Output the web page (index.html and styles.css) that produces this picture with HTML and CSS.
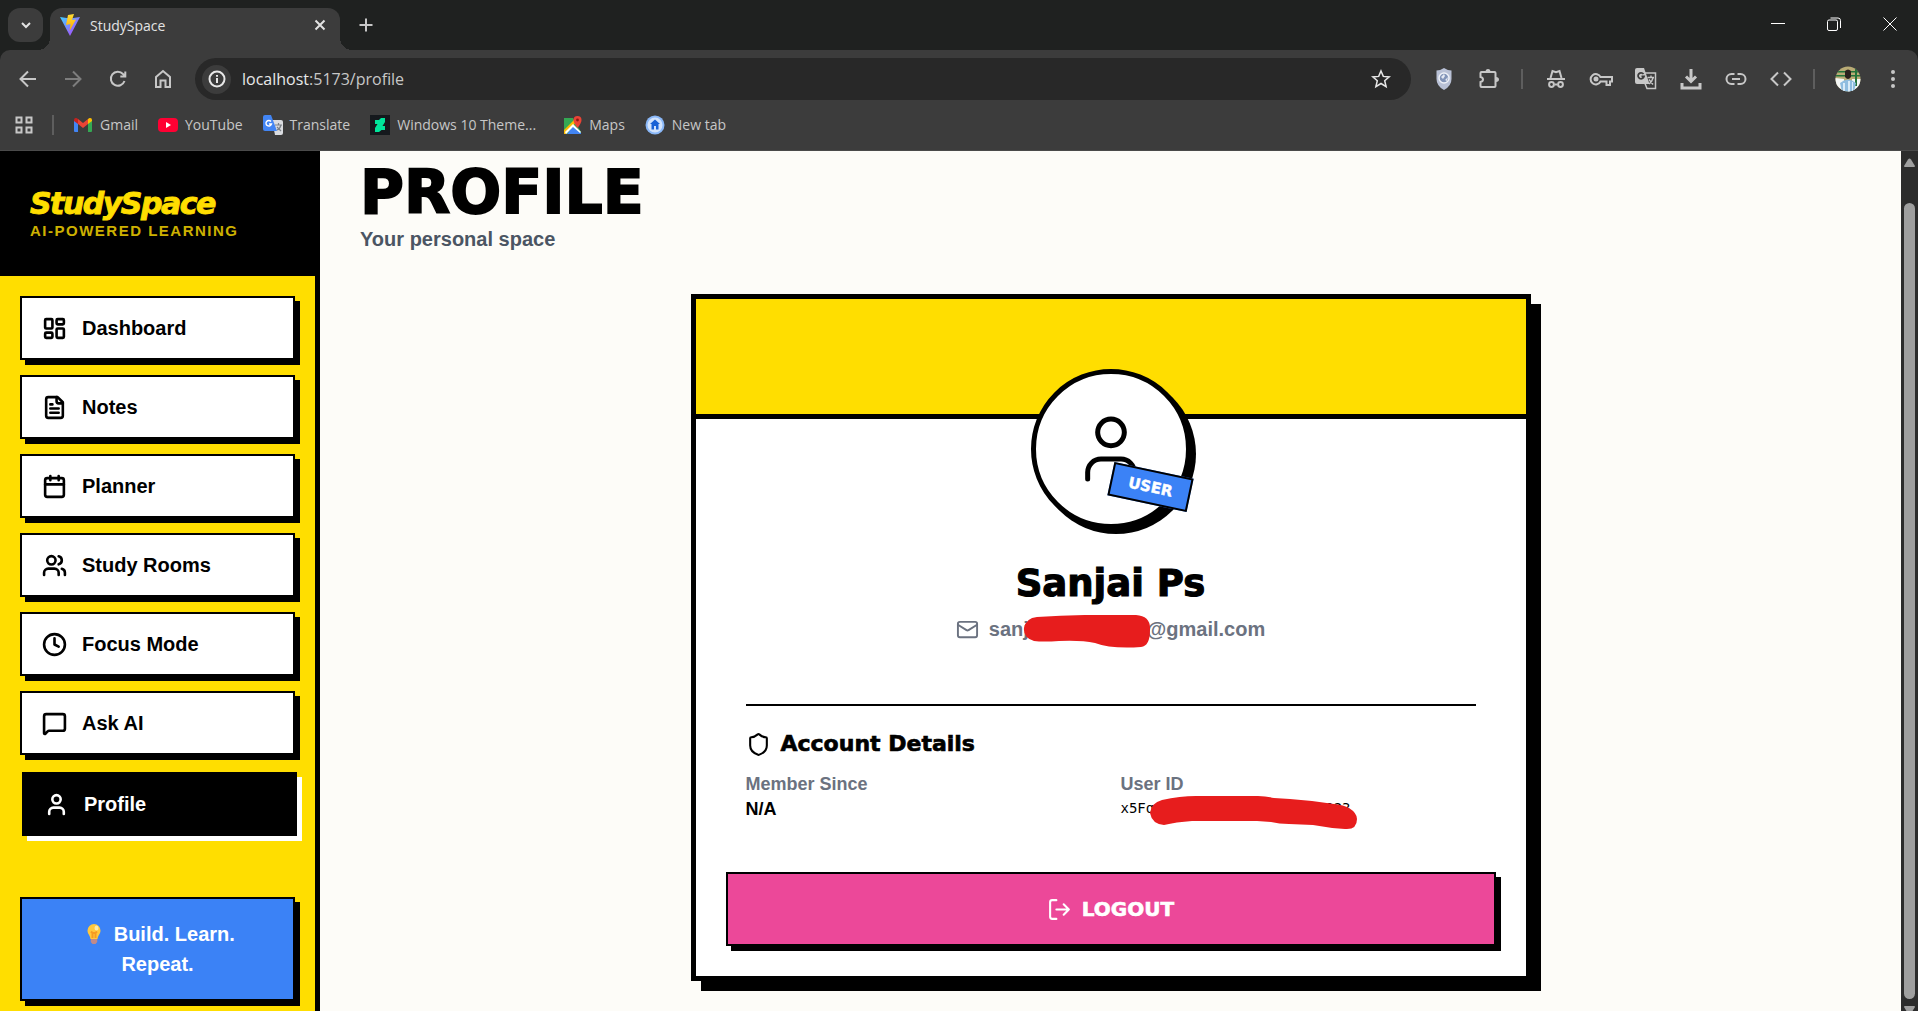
FILE: index.html
```html
<!DOCTYPE html>
<html lang="en">

<head>
    <meta charset="UTF-8">
    <meta name="viewport" content="width=device-width, initial-scale=1.0">
    <title>StudySpace</title>
    <link rel="stylesheet" href="styles.css">
</head>

<body>
    <header class="browser">
        <div class="tab-strip">
            <button class="tab-search" aria-label="Search tabs">
                <svg width="16" height="16" viewBox="0 0 16 16"><path d="M4 6l4 4 4-4" /></svg>
            </button>
            <div class="tab">
                <svg class="fill" width="20" height="24" viewBox="0 0 20 24">
                    <defs>
                        <linearGradient id="vite" x1="0" y1="0" x2="1" y2="1">
                            <stop offset="0" stop-color="#41d1ff" />
                            <stop offset="1" stop-color="#bd34fe" />
                        </linearGradient>
                        <linearGradient id="bolt" x1="0" y1="0" x2="0" y2="1">
                            <stop offset="0" stop-color="#ffdd35" />
                            <stop offset="1" stop-color="#ffa800" />
                        </linearGradient>
                    </defs>
                    <path fill="url(#vite)" d="M0 4l10 1.500L20 4 10 23z" />
                    <path fill="url(#bolt)" d="M8 2l6-1-2 6 4-.5L9.500 18l1-7L6 12z" />
                </svg>
                <span class="tab-title">StudySpace</span>
                <button class="tab-close" aria-label="Close tab">
                    <svg width="16" height="16" viewBox="0 0 16 16"><path d="M3.500 3.500l9 9M12.500 3.500l-9 9" /></svg>
                </button>
            </div>
            <button class="new-tab" aria-label="New tab">
                <svg width="16" height="16" viewBox="0 0 16 16"><path d="M8 1.500v13M1.500 8h13" /></svg>
            </button>
            <div class="window-buttons">
                <button aria-label="Minimize"><svg width="14" height="14" viewBox="0 0 14 14"><path d="M0 6.500h14" /></svg></button>
                <button aria-label="Restore"><svg width="14" height="14" viewBox="0 0 14 14"><rect x=".5" y="3" width="10" height="10.500" rx="1.500" /><path d="M3.500 1h7.500q2.500 0 2.500 2.500V11" /></svg></button>
                <button aria-label="Close"><svg width="14" height="14" viewBox="0 0 14 14"><path d="M.5.5l13 13M13.500.5l-13 13" /></svg></button>
            </div>
        </div>

        <div class="toolbar">
            <button class="tool" aria-label="Back"><svg width="18" height="18" viewBox="0 0 18 18"><path d="M17 9H2M9 1.500L1.500 9 9 16.500" /></svg></button>
            <button class="tool tool-off" aria-label="Forward"><svg width="18" height="18" viewBox="0 0 18 18"><path d="M1 9h15M9 1.500L16.500 9 9 16.500" /></svg></button>
            <button class="tool" aria-label="Reload"><svg width="18" height="18" viewBox="0 0 18 18"><path d="M15.500 11A7 7 0 1 1 14 4l2 2M16.300 1.500v5h-5" /></svg></button>
            <button class="tool" aria-label="Home"><svg width="18" height="20" viewBox="0 0 18 20"><path d="M2 8l7-6 7 6v10h-4.500v-6.500h-5V18H2z" /></svg></button>
            <div class="omnibox">
                <button class="site-info" aria-label="Site information">
                    <svg width="18" height="18" viewBox="0 0 18 18"><circle cx="9" cy="9" r="7.500" /><path d="M9 8v5M9 5v1.800" /></svg>
                </button>
                <span class="url">localhost<span class="url-dim">:5173/profile</span></span>
                <button class="star" aria-label="Bookmark this tab">
                    <svg width="20" height="20" viewBox="0 0 20 20"><path d="M10 2l2.300 5.400 5.900.5-4.500 3.900 1.400 5.800-5.100-3.100-5.100 3.100 1.400-5.800L1.800 7.900l5.900-.5z" /></svg>
                </button>
            </div>
            <button class="tool" aria-label="Privacy shield">
                <svg class="fill" width="18" height="22" viewBox="0 0 18 22"><path fill="#b9c1d6" d="M9 0q4 2.500 7.500 2.500V11q0 7-7.500 11Q1.500 18 1.500 11V2.500Q5 2.500 9 0z" /><circle cx="9" cy="10" r="5" fill="#8294b8" stroke="#eef1f8" stroke-width="1.500" /><path fill="#e3e8f2" d="M6 9l3-3 1 2-2 3zM10 12l3-3-1 4z" /></svg>
            </button>
            <button class="tool" aria-label="Extensions"><svg width="22" height="22" viewBox="0 0 22 22"><path d="M3.500 4h13q1 0 1 1v13q0 1-1 1h-13q-1 0-1-1v-4q2.500-.5 2.500-2.500T2.500 9V5q0-1 1-1z" /><path class="solid" stroke="none" d="M7.500 4a2.500 3 0 0 1 5 0zM18 9a3 2.500 0 0 1 0 5z" /></svg></button>
            <span class="divider"></span>
            <button class="tool" aria-label="Incognito"><svg width="20" height="20" viewBox="0 0 20 20"><path d="M1 10h18M4.500 9l2-7 3.500 1.200L13.500 2l2 7M8.500 15.500h3" /><circle cx="5.500" cy="15.500" r="2.400" /><circle cx="14.500" cy="15.500" r="2.400" /></svg></button>
            <button class="tool" aria-label="Passwords"><svg width="24" height="18" viewBox="0 0 24 18"><path d="M11.500 7H23v4.500h-2V15h-3.500v-3.500h-6A5.200 5.200 0 1 1 11.500 7z" /><circle class="solid" cx="7" cy="9" r="1.500" /></svg></button>
            <button class="tool" aria-label="Translate page"><svg width="22" height="22" viewBox="0 0 22 22"><path stroke-width="1.500" d="M10 5h10.500v15.500H12l-2-5" /><path class="solid" stroke="none" d="M2 0h7l5.500 16H2q-2 0-2-2V2q0-2 2-2z" /><path stroke="#3c3c3c" stroke-width="1.800" d="M8.500 6A3 3 0 1 0 9 8.500H6.500" /><path stroke-width="1.400" d="M12.500 9.500h6.500M16 7.500v2M18 10q-1 4-4 6M14 11.500l4 5" /></svg></button>
            <button class="tool" aria-label="Downloads"><svg class="bold" width="22" height="22" viewBox="0 0 22 22"><path d="M11 1v12M6 8.500l5 5 5-5M2 15v5h18v-5" /></svg></button>
            <button class="tool" aria-label="Copy link"><svg width="22" height="14" viewBox="0 0 22 14"><path d="M9.500 2H6.500a5 5 0 0 0 0 10h3M12.500 2h3a5 5 0 0 1 0 10h-3M7 7h8" /></svg></button>
            <button class="tool" aria-label="Developer tools"><svg width="22" height="16" viewBox="0 0 22 16"><path d="M8 1.500L1.500 8 8 14.500M14 1.500L20.500 8 14 14.500" /></svg></button>
            <span class="divider"></span>
            <button class="tool" aria-label="Account">
                <svg class="fill" width="26" height="26" viewBox="0 0 26 26">
                    <defs><clipPath id="face"><circle cx="13" cy="13" r="12.500" /></clipPath></defs>
                    <g clip-path="url(#face)">
                        <path fill="#b9ab75" d="M0 0h26v26H0z" />
                        <path fill="#f4f7f5" d="M0 12l9 1v13H0zM17 13h9v13h-9z" />
                        <path fill="#22733a" d="M0 5h26v1.500H0zM0 9h26v1.500H0zM20 2h2v18h-2z" />
                        <path fill="#8fbde0" d="M5 17q8-7 16 0l-2 9H7z" />
                        <path fill="#d8ebf8" d="M8 17h2v9H8zM13 15h2v11h-2zM17 16h1v10h-1z" />
                        <path fill="#2c211e" d="M10 5q3-3 6 0v6q-3 4-6 0z" />
                    </g>
                </svg>
            </button>
            <button class="tool" aria-label="Menu"><svg width="6" height="20" viewBox="0 0 6 20"><circle class="solid" cx="3" cy="3" r="1" /><circle class="solid" cx="3" cy="10" r="1" /><circle class="solid" cx="3" cy="17" r="1" /></svg></button>
        </div>

        <nav class="bookmarks" aria-label="Bookmarks">
            <button class="apps" aria-label="Apps"><svg width="18" height="18" viewBox="0 0 18 18"><path d="M1.500 1.500h5v5h-5zM11.500 1.500h5v5h-5zM1.500 11.500h5v5h-5zM11.500 11.500h5v5h-5z" /></svg></button>
            <span class="divider"></span>
            <a class="bookmark" href="#">
                <svg class="fill" width="20" height="20" viewBox="0 0 20 20"><path fill="#4285f4" d="M1 5l4 3v9H2q-1 0-1-1z" /><path fill="#34a853" d="M15 8l4-3v11q0 1-1 1h-3z" /><path fill="#ea4335" d="M5 4l5 4 5-4v5l-5 4-5-4z" /><path fill="#c5221f" d="M1 5q0-2.500 2.500-2L5 4v5L1 6z" /><path fill="#fbbc04" d="M19 5q0-2.500-2.500-2L15 4v5l4-3z" /></svg>
                Gmail
            </a>
            <a class="bookmark" href="#">
                <svg class="fill" width="20" height="20" viewBox="0 0 20 20"><rect y="3" width="20" height="14" rx="4" fill="#ff0033" /><path fill="#fff" d="M8 7l5 3-5 3z" /></svg>
                YouTube
            </a>
            <a class="bookmark" href="#">
                <svg class="fill" width="20" height="20" viewBox="0 0 20 20"><path fill="#dadce0" d="M9 5h9q2 0 2 2v11q0 2-2 2h-6z" /><path fill="#4285f4" d="M2 0h6l6 16H2q-2 0-2-2V2q0-2 2-2z" /><path fill="none" stroke="#fff" stroke-width="1.400" d="M8 6.500A2.800 2.800 0 1 0 8.500 9H6" /><path fill="none" stroke="#7a8087" stroke-width="1.200" d="M12 10h7M15.500 8v2M18 10q-1 4-4 5M14 12l4 4" /></svg>
                Translate
            </a>
            <a class="bookmark" href="#">
                <svg class="fill" width="20" height="20" viewBox="0 0 20 20"><path fill="#15191d" d="M0 0h20v20H0z" /><path fill="#00e59b" d="M11 3h4v4l-2.500 4H15v4h-3.500L9 17H5v-4l2.500-4H5V5h4z" /></svg>
                <span class="bookmark-long">Windows 10 Theme...</span>
            </a>
            <a class="bookmark" href="#">
                <svg class="fill" width="18" height="18" viewBox="0 0 18 18"><path fill="#34a853" d="M0 2h9l8 14v2H0z" /><path fill="#fbbc04" d="M0 14L11 3l2 2L2 18H0z" /><path fill="#4285f4" d="M9 10l8 7v1H3z" /><path fill="#fff" d="M1 16l8-8 8 8-1 1-7-6-7 7z" /><path fill="#ea4335" d="M13.500 0a4 4 0 0 1 4 4q0 3-4 8-4-5-4-8a4 4 0 0 1 4-4z" /><circle cx="13.500" cy="4" r="1.400" fill="#8c1a12" /></svg>
                Maps
            </a>
            <a class="bookmark" href="#">
                <svg class="fill" width="20" height="20" viewBox="0 0 20 20"><circle cx="10" cy="10" r="9.500" fill="#8ab8f8" /><circle cx="10" cy="10" r="7.500" fill="#d2e3fc" /><path fill="#1a62d6" d="M10 4.500l5 4.500h-1.500v5.500h-2.500V11H9v3.500H6.500V9H5z" /></svg>
                New tab
            </a>
        </nav>
    </header>

    <div class="app">
        <aside class="sidebar">
            <div class="brand">
                <div class="brand-name">StudySpace</div>
                <div class="brand-tag">AI-POWERED LEARNING</div>
            </div>
            <nav class="menu" aria-label="Main">
                <a class="menu-item" href="#">
                    <svg viewBox="0 0 24 24"><rect width="7" height="9" x="3" y="3" rx="1" /><rect width="7" height="5" x="14" y="3" rx="1" /><rect width="7" height="9" x="14" y="12" rx="1" /><rect width="7" height="5" x="3" y="16" rx="1" /></svg>
                    Dashboard
                </a>
                <a class="menu-item" href="#">
                    <svg viewBox="0 0 24 24"><path d="M15 2H6a2 2 0 0 0-2 2v16a2 2 0 0 0 2 2h12a2 2 0 0 0 2-2V7Z" /><path d="M14 2v4a2 2 0 0 0 2 2h4M10 9H8M16 13H8M16 17H8" /></svg>
                    Notes
                </a>
                <a class="menu-item" href="#">
                    <svg viewBox="0 0 24 24"><path d="M8 2v4M16 2v4M3 10h18" /><rect width="18" height="18" x="3" y="4" rx="2" /></svg>
                    Planner
                </a>
                <a class="menu-item" href="#">
                    <svg viewBox="0 0 24 24"><path d="M16 21v-2a4 4 0 0 0-4-4H6a4 4 0 0 0-4 4v2M22 21v-2a4 4 0 0 0-3-3.870M16 3.130a4 4 0 0 1 0 7.750" /><circle cx="9" cy="7" r="4" /></svg>
                    Study Rooms
                </a>
                <a class="menu-item" href="#">
                    <svg viewBox="0 0 24 24"><circle cx="12" cy="12" r="10" /><path d="M12 6v6l4 2" /></svg>
                    Focus Mode
                </a>
                <a class="menu-item" href="#">
                    <svg viewBox="0 0 24 24"><path d="M22 17a2 2 0 0 1-2 2H6.800a2 2 0 0 0-1.400.6l-2.200 2.200A.7.7 0 0 1 2 21.300V5a2 2 0 0 1 2-2h16a2 2 0 0 1 2 2z" /></svg>
                    Ask AI
                </a>
                <a class="menu-item active" href="#">
                    <svg viewBox="0 0 24 24"><path d="M19 21v-2a4 4 0 0 0-4-4H9a4 4 0 0 0-4 4v2" /><circle cx="12" cy="7" r="4" /></svg>
                    Profile
                </a>
            </nav>
            <div class="promo">
                <svg class="bulb" viewBox="0 0 14 20"><path fill="#ffc83d" d="M7 0a6.500 6.500 0 0 1 6.500 6.500c0 3.500-2.500 4.500-3 8.500h-7C3 11 .5 10 .5 6.500A6.500 6.500 0 0 1 7 0z" /><path fill="none" stroke="#f59b23" d="M5.500 14V9L4 7.500M8.500 14V9L10 7.500M5.500 9h3" /><ellipse cx="9.500" cy="4" rx="2" ry="2.500" fill="#ffe9a6" /><path fill="#c08a8a" d="M3.800 15h6.400v3L8.500 20h-3l-1.700-2z" /></svg>
                Build. Learn. Repeat.
            </div>
        </aside>

        <main class="content">
            <h1>PROFILE</h1>
            <p class="subtitle">Your personal space</p>

            <section class="card">
                <div class="cover"></div>
                <div class="card-body">
                    <div class="avatar">
                        <svg viewBox="0 0 24 24"><path d="M19 21v-2a4 4 0 0 0-4-4H9a4 4 0 0 0-4 4v2" /><circle cx="12" cy="7" r="4" /></svg>
                        <span class="badge">USER</span>
                    </div>
                    <h2>Sanjai Ps</h2>
                    <p class="email">
                        <svg viewBox="0 0 24 24"><rect width="20" height="16" x="2" y="4" rx="2" /><path d="m22 7-8.970 5.700a1.940 1.940 0 0 1-2.060 0L2 7" /></svg>
                        <span class="masked">sanj<svg class="scribble scribble-email" viewBox="0 0 128 33"><path d="M14 2Q60-1 113 0q15 1 14 15 0 16-9 17-30 2-46-4-14-3-36-2-16 1-25 0Q0 23 1 13 3 3 14 2z" /></svg>@gmail.com</span>
                    </p>

                    <div class="details">
                        <h3>
                            <svg viewBox="0 0 24 24"><path d="M20 13c0 5-3.500 7.500-7.660 8.950a1 1 0 0 1-.67-.01C7.500 20.500 4 18 4 13V6a1 1 0 0 1 1-1c2 0 4.500-1.200 6.240-2.720a1.170 1.170 0 0 1 1.520 0C14.510 3.810 17 5 19 5a1 1 0 0 1 1 1z" /></svg>
                            Account Details
                        </h3>
                        <dl>
                            <div>
                                <dt>Member Since</dt>
                                <dd>N/A</dd>
                            </div>
                            <div>
                                <dt>User ID</dt>
                                <dd class="masked mono">x5Fq<svg class="scribble scribble-id" viewBox="0 0 208 35"><path d="M12 5Q30 1 46 1h62q8 0 16 2l16 1 22 2 22 3q10 1 15 4 8 5 8 11 0 11-12 10-16-1-32-4l-24-1q-10 0-18-2l-14-1H42q-16 1-28 4Q2 29 0 18 1 8 12 5z" /></svg>023</dd>
                            </div>
                        </dl>
                    </div>

                    <button class="logout">
                        <svg viewBox="0 0 24 24"><path d="M9 21H5a2 2 0 0 1-2-2V5a2 2 0 0 1 2-2h4M16 17l5-5-5-5M21 12H9" /></svg>
                        LOGOUT
                    </button>
                </div>
            </section>
        </main>

        <div class="scrollbar">
            <svg width="11" height="9" viewBox="0 0 11 9"><path d="M4 1.500q1.500-2 3 0L11 8q0 1-1 1H1Q0 9 0 8z" /></svg>
            <span class="thumb"></span>
            <svg width="11" height="9" viewBox="0 0 11 9"><path d="M4 7.500q1.500 2 3 0L11 1q0-1-1-1H1Q0 0 0 1z" /></svg>
        </div>
    </div>
</body>

</html>
```

FILE: styles.css
```css
* {
    box-sizing: border-box;
}

body {
    margin: 0;
    height: 100vh;
    display: flex;
    flex-direction: column;
    overflow: hidden;
    font-family: "Liberation Sans", Arial, sans-serif;
    font-size: 20px;
    color: #000;
}

button {
    font: inherit;
    color: inherit;
    background: none;
    border: 0;
    padding: 0;
    display: flex;
    align-items: center;
    justify-content: center;
}

a {
    color: inherit;
    text-decoration: none;
}

h1, h2, h3, p, dl, dd {
    margin: 0;
}

svg {
    flex: none;
    fill: none;
    stroke: currentColor;
    stroke-width: 2;
}

svg.fill {
    stroke: none;
}

.solid {
    fill: currentColor;
}

/* browser window */
.browser {
    flex: none;
    background: #1f2120;
    color: #c7c7c7;
    border-bottom: 1px solid #4a4a4a;
    font-family: "Open Sans", "Noto Sans", sans-serif;
    font-size: 14px;
}

.tab-strip {
    display: flex;
    align-items: flex-end;
    height: 50px;
    padding-left: 8px;
}

.tab-search {
    width: 35px;
    height: 34px;
    margin: 0 7px 8px 0;
    border-radius: 12px;
    background: #3c3c3c;
    color: #e3e3e3;
}

.tab {
    position: relative;
    display: flex;
    align-items: center;
    width: 290px;
    height: 42px;
    padding: 0 12px 8px 10px;
    border-radius: 12px 12px 0 0;
    background: #3c3c3c;
    color: #e3e3e3;
}

/* curved feet of the tab */
.tab::before,
.tab::after {
    content: "";
    position: absolute;
    bottom: 0;
    width: 12px;
    height: 12px;
}

.tab::before {
    right: 100%;
    background: radial-gradient(circle at 0 0, transparent 12px, #3c3c3c 12px);
}

.tab::after {
    left: 100%;
    background: radial-gradient(circle at 100% 0, transparent 12px, #3c3c3c 12px);
}

.tab-title {
    flex: 1;
    margin-left: 10px;
}

.new-tab {
    width: 34px;
    height: 34px;
    margin: 0 0 8px 9px;
}

.window-buttons {
    display: flex;
    margin-left: auto;
    align-self: flex-start;
    color: #fff;
}

.window-buttons button {
    width: 56px;
    height: 48px;
}

.window-buttons svg {
    stroke-width: 1;
}

.toolbar {
    display: flex;
    align-items: center;
    height: 58px;
    padding: 0 3px 0 5px;
    border-radius: 10px 10px 0 0;
    background: #3c3c3c;
}

.tool {
    width: 45px;
    height: 40px;
}

.tool-off {
    color: #7d7d7d;
}

.bold {
    stroke-width: 3;
}

.divider {
    width: 2px;
    height: 20px;
    margin: 0 10px;
    background: #5e5e5e;
}

.omnibox {
    flex: 1;
    display: flex;
    align-items: center;
    height: 42px;
    margin: 0 10px;
    padding: 0 20px 0 7px;
    border-radius: 21px;
    background: #282828;
    color: #e8e8e8;
    font-size: 16px;
}

.site-info {
    width: 29px;
    height: 29px;
    border-radius: 50%;
    background: #3c3c3c;
}

.url {
    flex: 1;
    margin-left: 11px;
}

.url-dim {
    color: #c7c7c7;
}

.star svg {
    stroke-width: 1.5;
}

.bookmarks {
    display: flex;
    align-items: center;
    height: 42px;
    padding: 0 15px 9px;
    background: #3c3c3c;
}

.bookmarks .divider {
    margin: 0 19px;
}

.bookmark {
    display: flex;
    align-items: center;
    gap: 7px;
    margin-right: 20px;
}

.bookmark-long {
    width: 147px;
}

/* app */
.app {
    flex: 1;
    min-height: 0;
    display: flex;
    background: #fdfcf8;
}

.sidebar {
    flex: none;
    width: 320px;
    border-right: 5px solid #000;
    background: #ffde00;
}

.brand {
    height: 125px;
    padding: 35px 30px;
    background: #000;
    color: #ffde00;
}

.brand-name,
h1, h2, h3, .badge, .logout {
    font-family: "Arial Black", "DejaVu Sans", sans-serif;
    font-weight: 900;
    -webkit-text-stroke: 0.03em currentColor;
}

.brand-name {
    font-size: 30px;
    font-style: italic;
    letter-spacing: -0.05em;
    line-height: 35px;
}

.brand-tag {
    font-size: 15px;
    font-weight: bold;
    letter-spacing: 0.1em;
    line-height: 20px;
    opacity: 0.8;
}

.menu {
    display: flex;
    flex-direction: column;
    gap: 15px;
    padding: 20px;
}

.menu-item {
    display: flex;
    align-items: center;
    gap: 15px;
    height: 64px;
    padding: 0 20px;
    border: 2px solid #000;
    background: #fff;
    box-shadow: 5px 5px 0 #000;
    font-weight: bold;
}

.menu-item svg,
.details h3 svg,
.logout svg {
    width: 25px;
    height: 25px;
}

.menu-item svg {
    stroke-width: 2.5;
}

.menu svg,
.email svg,
.details h3 svg,
.logout svg,
.avatar svg {
    stroke-linecap: round;
    stroke-linejoin: round;
}

.menu-item.active {
    background: #000;
    color: #fff;
    box-shadow: 5px 5px 0 #fff;
    transform: translate(2px, 2px);
}

.promo {
    margin: 43px 20px 0;
    padding: 20px 40px;
    border: 2px solid #000;
    background: #3b82f6;
    box-shadow: 5px 5px 0 #000;
    color: #fff;
    font-weight: bold;
    line-height: 30px;
    text-align: center;
}

.bulb {
    width: 14px;
    height: 20px;
    margin: 0 7px;
    stroke: none;
    vertical-align: -3px;
}

.content {
    flex: 1;
    padding: 11px 40px;
}

h1 {
    font-size: 60px;
    line-height: 60px;
}

.subtitle {
    margin-top: 3px;
    color: #4b5563;
    font-weight: bold;
    line-height: 28px;
}

.card {
    max-width: 840px;
    margin: 41px auto 0;
    border: 5px solid #000;
    background: #fff;
    box-shadow: 10px 10px 0 #000;
}

.cover {
    height: 120px;
    border-bottom: 5px solid #000;
    background: #ffde00;
}

.card-body {
    display: flex;
    flex-direction: column;
    align-items: center;
    padding: 0 30px 30px;
}

.avatar {
    position: relative;
    display: flex;
    align-items: center;
    justify-content: center;
    width: 160px;
    height: 160px;
    margin-top: -50px;
    border: 5px solid #000;
    border-radius: 50%;
    background: #fff;
    box-shadow: 5px 5px 0 #000;
}

.avatar svg {
    width: 80px;
    height: 80px;
    stroke-width: 1.5;
}

.badge {
    position: absolute;
    right: -5px;
    bottom: 20px;
    padding: 5px 16px;
    border: 2px solid #000;
    background: #3b82f6;
    color: #fff;
    font-size: 15px;
    line-height: 20px;
    transform: rotate(12deg);
}

h2 {
    margin-top: 32px;
    font-size: 37px;
    line-height: 45px;
}

.email {
    display: flex;
    align-items: center;
    gap: 10px;
    margin-top: 8px;
    color: #6b7280;
    font-weight: bold;
    line-height: 30px;
}

.email svg {
    width: 23px;
    height: 23px;
}

.masked {
    display: flex;
    align-items: center;
}

/* red marker strokes over private text */
.masked .scribble {
    position: relative;
    z-index: 1;
    fill: #e71d1d;
    stroke: none;
}

.email .scribble-email {
    width: 128px;
    height: 33px;
    margin: 0 -4px -4px -6px;
}

.details {
    align-self: stretch;
    margin: 60px 20px 0;
    padding-top: 20px;
    border-top: 2px solid #000;
}

.details h3 {
    display: flex;
    align-items: center;
    gap: 10px;
    font-size: 22px;
    line-height: 36px;
}

dl {
    display: grid;
    grid-template-columns: 1fr 1fr;
    gap: 20px;
    margin-top: 10px;
    font-size: 18px;
    font-weight: bold;
    line-height: 25px;
}

dt {
    color: #6b7280;
}

.mono {
    height: 23px;
    font-family: "DejaVu Sans Mono", monospace;
    font-size: 14px;
    font-weight: normal;
}

.scribble-id {
    width: 208px;
    height: 35px;
    margin: 8px -33px 0 -4px;
}

.logout {
    align-self: stretch;
    gap: 10px;
    height: 74px;
    margin-top: 50px;
    border: 2px solid #000;
    background: #ec4899;
    box-shadow: 5px 5px 0 #000;
    color: #fff;
}

.scrollbar {
    flex: none;
    display: flex;
    flex-direction: column;
    align-items: center;
    gap: 7px;
    width: 17px;
    padding-top: 7px;
    margin-bottom: -4px;
    background: #2c2c2c;
}

.scrollbar svg {
    fill: #9f9f9f;
    stroke: none;
}

.thumb {
    flex: 1;
    width: 11px;
    margin-top: 29px;
    border-radius: 6px;
    background: #9f9f9f;
}
```
